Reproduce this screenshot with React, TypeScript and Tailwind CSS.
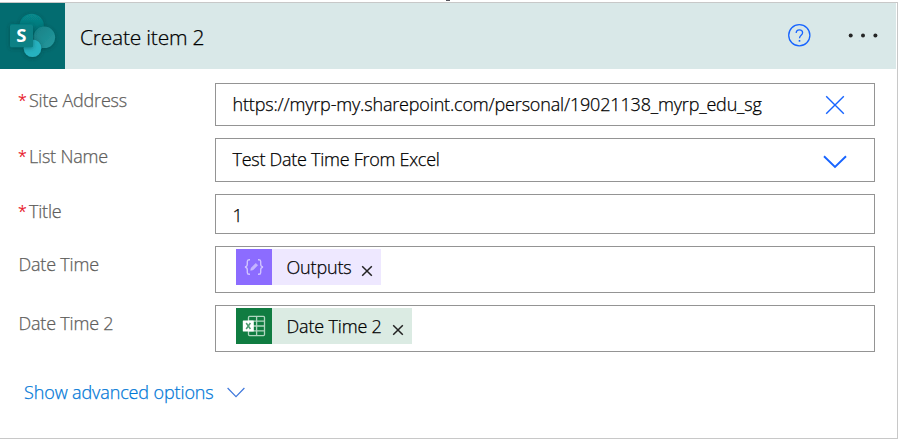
import type { ReactNode } from "react";

function SharePointIcon() {
  return (
    <svg width="65" height="66" viewBox="0 0 65 66" className="block shrink-0">
      <defs>
        <filter id="soft" x="-30%" y="-30%" width="160%" height="160%">
          <feDropShadow dx="0" dy="1" stdDeviation="2" floodColor="#003438" floodOpacity="0.5" />
        </filter>
        <linearGradient id="top" x1="0" y1="0" x2="0" y2="1">
          <stop offset="0" stopColor="#07898c" />
          <stop offset="1" stopColor="#046a6e" />
        </linearGradient>
        <linearGradient id="side" x1="0" y1="0" x2="1" y2="1">
          <stop offset="0" stopColor="#167f84" />
          <stop offset="1" stopColor="#259a9f" />
        </linearGradient>
      </defs>
      <rect width="65" height="66" fill="#036c70" />
      <circle cx="31.7" cy="23" r="12.2" fill="url(#top)" filter="url(#soft)" />
      <circle cx="44.3" cy="34.3" r="10.8" fill="url(#side)" filter="url(#soft)" />
      <circle cx="32.5" cy="45.2" r="8.8" fill="#28b2c0" filter="url(#soft)" />
      <rect x="10" y="21.3" width="23" height="23" rx="1.5" fill="#078185" filter="url(#soft)" />
      <text x="21.3" y="39.3" textAnchor="middle" fontFamily="Open Sans, sans-serif" fontWeight="700" fontSize="18.5" fill="#fff">
        S
      </text>
    </svg>
  );
}

function Row({ label, required, height, pad, children }: { label: string; required?: boolean; height: string; pad: string; children: ReactNode }) {
  return (
    <div className="flex">
      <div className={`flex w-[215px] shrink-0 pl-[19px] text-[18px] leading-6 tracking-[-0.2px] text-[#605e5c] ${pad}`}>
        {required && <span className="-ml-px w-[11px] text-[16px] text-[#e81123]">*</span>}
        <span className={required ? "" : "-ml-[0.5px]"}>{label}</span>
      </div>
      <div className={`flex w-[660px] items-center border border-[#949494] pl-[16.5px] text-[18px] tracking-[-0.17px] text-black ${height}`}>{children}</div>
    </div>
  );
}

function RemoveMark() {
  return (
    <svg width="12" height="12" viewBox="0 0 12 12" className="mt-[7px] block" fill="none" stroke="#222" strokeWidth="1.5">
      <path d="M1.2 1.2 10.8 10.8M10.8 1.2 1.2 10.8" />
    </svg>
  );
}

export default function App() {
  return (
    <div className="relative h-[440px] w-[898px] overflow-hidden bg-white pt-[2px] font-['Open_Sans','Noto_Sans',sans-serif] font-light [-webkit-text-stroke:0.25px]">
      <div className="absolute left-[446px] top-0 h-px w-[4px] bg-[#55545c]" />
      <div className="h-[437px] border-y border-r border-[#c8c8c8]">
        <header className="mr-px flex h-[66px] items-center bg-[#d9e8e8]">
          <SharePointIcon />
          <h1 className="ml-[15px] mt-[3px] grow text-[21px] font-light tracking-[-0.22px] text-black">Create item 2</h1>
          <svg width="24" height="24" viewBox="0 0 24 24" className="mr-[37px] block" fill="none" stroke="#1764ff" strokeWidth="1.3">
            <circle cx="12.3" cy="11.3" r="10.6" />
            <path d="M9.2 9.1C9.2 7.2 10.5 5.9 12.4 5.9S15.6 7.1 15.6 8.8C15.6 11.2 12.5 11.5 12.5 14.2" />
            <path d="M12.5 16v1.7" strokeWidth="1.6" />
          </svg>
          <svg width="30" height="6" viewBox="0 0 30 6" className="mr-[18px] block" fill="#252525">
            <circle cx="2.7" cy="2.5" r="2" />
            <circle cx="15" cy="2.5" r="2" />
            <circle cx="27.4" cy="2.5" r="2" />
          </svg>
        </header>
        <main className="flex flex-col gap-3 pt-[14px]">
          <Row label="Site Address" required height="h-[43px]" pad="pt-[5px]">
            <span className="grow">https://myrp-my.sharepoint.com/personal/19021138_myrp_edu_sg</span>
            <svg width="20" height="20" viewBox="0 0 20 20" className="mr-[29px] block" fill="none" stroke="#1764ff" strokeWidth="1.4">
              <path d="M1.2 1.2 18.8 18.8M18.8 1.2 1.2 18.8" />
            </svg>
          </Row>
          <Row label="List Name" required height="h-[44px]" pad="pt-[6px]">
            <span className="mb-px grow tracking-[-0.27px]">Test Date Time From Excel</span>
            <svg width="24" height="14" viewBox="0 0 24 14" className="mr-[27px] mt-1 block" fill="none" stroke="#1764ff" strokeWidth="1.9">
              <path d="M1 1.2 12 12 23 1.2" />
            </svg>
          </Row>
          <Row label="Title" required height="h-[40px]" pad="pt-[5px]">
            <span className="mt-[3px]">1</span>
          </Row>
          <Row label="Date Time" height="h-[47px]" pad="pt-[6px]">
            <div className="mb-[5px] ml-[3.5px] flex h-9 w-[145px] items-center bg-[#eee8ff]">
              <div className="flex size-9 items-center justify-center bg-[#8c6cff]">
                <svg width="20" height="18" viewBox="0 0 20 18" fill="none" stroke="#d0c3ff" strokeWidth="1.4">
                  <path d="M6 1.7H5C3.8 1.7 3.3 2.4 3.3 3.5V6.2C3.3 7.8 2.7 8.7 1 9 2.7 9.3 3.3 10.2 3.3 11.8V14.5C3.3 15.6 3.8 16.3 5 16.3H6M14 1.7H15C16.2 1.7 16.7 2.4 16.7 3.5V6.2C16.7 7.8 17.3 8.7 19 9 17.3 9.3 16.7 10.2 16.7 11.8V14.5C16.7 15.6 16.2 16.3 15 16.3H14" />
                  <path d="M6.7 12.3 7.3 9.9 11.8 5.4 13.6 7.2 9.1 11.7Z" fill="#c5b5ff" strokeWidth=".6" />
                </svg>
              </div>
              <span className="ml-[14.5px] mt-px w-[74.5px]">Outputs</span>
              <RemoveMark />
            </div>
          </Row>
          <Row label="Date Time 2" height="h-[47px]" pad="pt-[6px]">
            <div className="mb-[5px] ml-[3.5px] flex h-9 w-[176px] items-center bg-[#dbebe3]">
              <div className="flex size-9 items-center justify-center bg-[#107c41]">
                <svg width="24" height="22" viewBox="0 0 24 22">
                  <rect x="6.5" y="1.4" width="16" height="19.2" rx="1" fill="none" stroke="#b0d6c0" strokeWidth="1.3" />
                  <path d="M6.5 6.2H22.5M6.5 11H22.5M6.5 15.8H22.5M14.6 1.4V20.6" fill="none" stroke="#b0d6c0" strokeWidth="1.3" />
                  <rect x=".8" y="5.4" width="11" height="11.2" rx=".6" fill="#fff" />
                  <path d="M4.2 8 8.4 14M8.4 8 4.2 14" fill="none" stroke="#4d9b70" strokeWidth="1.5" />
                </svg>
              </div>
              <span className="ml-[14.5px] mt-px w-[105.5px]">Date Time 2</span>
              <RemoveMark />
            </div>
          </Row>
        </main>
        <div className="mt-[28px] flex items-center pl-[24px] text-[18px] leading-6 tracking-[-0.12px] text-[#0078d7]">
          <span className="w-[203px]">Show advanced options</span>
          <svg width="18" height="11" viewBox="0 0 18 11" fill="none" stroke="#3f78dc" strokeWidth="1.2">
            <path d="M.6 1 9 9.6 17.4 1" />
          </svg>
        </div>
      </div>
    </div>
  );
}
